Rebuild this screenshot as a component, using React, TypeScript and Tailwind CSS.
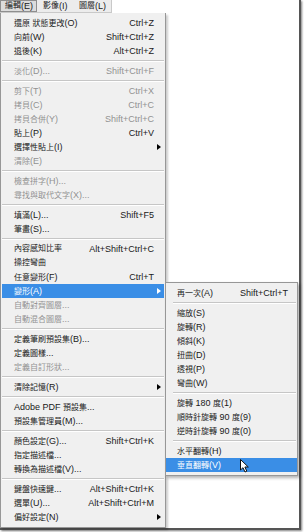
import React from 'react';

type Entry = { l: string; k?: string; d?: boolean; sub?: boolean; hi?: boolean } | 'sep';

const mainItems: Entry[] = [
  { l: '還原 狀態更改(O)', k: 'Ctrl+Z' },
  { l: '向前(W)', k: 'Shift+Ctrl+Z' },
  { l: '退後(K)', k: 'Alt+Ctrl+Z' },
  'sep',
  { l: '淡化(D)...', k: 'Shift+Ctrl+F', d: true },
  'sep',
  { l: '剪下(T)', k: 'Ctrl+X', d: true },
  { l: '拷貝(C)', k: 'Ctrl+C', d: true },
  { l: '拷貝合併(Y)', k: 'Shift+Ctrl+C', d: true },
  { l: '貼上(P)', k: 'Ctrl+V' },
  { l: '選擇性貼上(I)', sub: true },
  { l: '清除(E)', d: true },
  'sep',
  { l: '檢查拼字(H)...', d: true },
  { l: '尋找與取代文字(X)...', d: true },
  'sep',
  { l: '填滿(L)...', k: 'Shift+F5' },
  { l: '筆畫(S)...' },
  'sep',
  { l: '內容感知比率', k: 'Alt+Shift+Ctrl+C' },
  { l: '操控彎曲' },
  { l: '任意變形(F)', k: 'Ctrl+T' },
  { l: '變形(A)', sub: true, hi: true },
  { l: '自動對齊圖層...', d: true },
  { l: '自動混合圖層...', d: true },
  'sep',
  { l: '定義筆刷預設集(B)...' },
  { l: '定義圖樣...' },
  { l: '定義自訂形狀...', d: true },
  'sep',
  { l: '清除記憶(R)', sub: true },
  'sep',
  { l: 'Adobe PDF 預設集...' },
  { l: '預設集管理員(M)...' },
  'sep',
  { l: '顏色設定(G)...', k: 'Shift+Ctrl+K' },
  { l: '指定描述檔...' },
  { l: '轉換為描述檔(V)...' },
  'sep',
  { l: '鍵盤快速鍵...', k: 'Alt+Shift+Ctrl+K' },
  { l: '選單(U)...', k: 'Alt+Shift+Ctrl+M' },
  { l: '偏好設定(N)', sub: true },
];

const subItems: Entry[] = [
  { l: '再一次(A)', k: 'Shift+Ctrl+T' },
  'sep',
  { l: '縮放(S)' },
  { l: '旋轉(R)' },
  { l: '傾斜(K)' },
  { l: '扭曲(D)' },
  { l: '透視(P)' },
  { l: '彎曲(W)' },
  'sep',
  { l: '旋轉 180 度(1)' },
  { l: '順時針旋轉 90 度(9)' },
  { l: '逆時針旋轉 90 度(0)' },
  'sep',
  { l: '水平翻轉(H)' },
  { l: '垂直翻轉(V)', hi: true },
];

// latin runs are drawn a bit larger than the CJK glyphs, like the original UI font
const Txt: React.FC<{ s: string }> = ({ s }) => (
  <>
    {s.split(/([\x20-\x7E]+)/).map((p, i) =>
      p === '' ? null : /^[\x20-\x7E]+$/.test(p) ? (
        <span key={i} className="text-[9px] whitespace-pre">{p}</span>
      ) : (
        <span key={i}>{p}</span>
      )
    )}
  </>
);

const Arrow: React.FC<{ white?: boolean }> = ({ white }) => (
  <svg width="4" height="6" viewBox="0 0 4 6" className="absolute right-[3px] top-[4px]">
    <path d="M0 0 L4 3 L0 6 Z" fill={white ? '#ffffff' : '#000000'} />
  </svg>
);

const MenuList: React.FC<{ items: Entry[]; labelPad: string; keyPad: string; sepPad: string }> = ({
  items,
  labelPad,
  keyPad,
  sepPad,
}) => (
  <>
    {items.map((it, i) =>
      it === 'sep' ? (
        <div key={i} className={`h-[6px] flex flex-col justify-center ${sepPad}`}>
          <div className="border-t border-[#c6c6c6]" />
          <div className="border-t border-white" />
        </div>
      ) : (
        <div
          key={i}
          className={`relative h-[14px] flex items-center leading-none ${labelPad} ${keyPad} ${
            it.hi ? 'bg-[#3a8ee6] text-white' : it.d ? 'text-[#929292]' : 'text-[#1a1a1a]'
          }`}
        >
          <span className="flex-1 whitespace-nowrap">
            <Txt s={it.l} />
          </span>
          {it.k && <span className="text-[9px] whitespace-nowrap">{it.k}</span>}
          {it.sub && <Arrow white={it.hi} />}
        </div>
      )
    )}
  </>
);

export default function App() {
  return (
    <div className="w-[304px] h-[532px] bg-white overflow-hidden">
      <div
        className="relative w-[301px] h-[530px] bg-white border-r-[2px] border-b-[2px] border-[#555555] shadow-[1px_1px_2px_rgba(0,0,0,0.5)] text-[8px]"
        style={{ fontFamily: '"Liberation Sans", "Noto Sans CJK TC", sans-serif' }}
      >
        {/* menu bar */}
        <div className="flex h-[13px] w-[112px] bg-[#ececec] border-r border-b border-[#c9c9c9] text-[#1a1a1a] leading-none">
          <div className="w-[37px] flex items-center pl-[4px] bg-[#dcdcdc] border border-[#8e8e8e]">
            <Txt s="編輯(E)" />
          </div>
          <div className="w-[36px] flex items-center pl-[6px]">
            <Txt s="影像(I)" />
          </div>
          <div className="flex items-center pl-[6px]">
            <Txt s="圖層(L)" />
          </div>
        </div>

        {/* main menu */}
        <div className="w-[166px] bg-[#f0f0f0] border-x border-b border-[#979797] pt-[3px] pb-[3px] px-[1px] shadow-[2px_2px_2px_rgba(0,0,0,0.2)]">
          <MenuList items={mainItems} labelPad="pl-[12px]" keyPad="pr-[10px]" sepPad="px-[0px]" />
        </div>

        {/* transform submenu */}
        <div className="absolute left-[165px] top-[282px] w-[133px] bg-[#f0f0f0] border border-[#979797] py-[3px] shadow-[2px_2px_3px_rgba(0,0,0,0.3)]">
          <MenuList items={subItems} labelPad="pl-[11px]" keyPad="pr-[9px]" sepPad="pl-[7px] pr-[1px]" />
        </div>

        {/* mouse pointer */}
        <svg width="10" height="14" viewBox="0 0 10 14" className="absolute left-[240px] top-[459px]">
          <path d="M0.5 0.5 L0.5 11 L3 8.7 L5 13 L6.8 12.2 L4.9 8 L8.3 8 Z" fill="#ffffff" stroke="#111111" strokeWidth="1" strokeLinejoin="round" />
        </svg>
      </div>
    </div>
  );
}
